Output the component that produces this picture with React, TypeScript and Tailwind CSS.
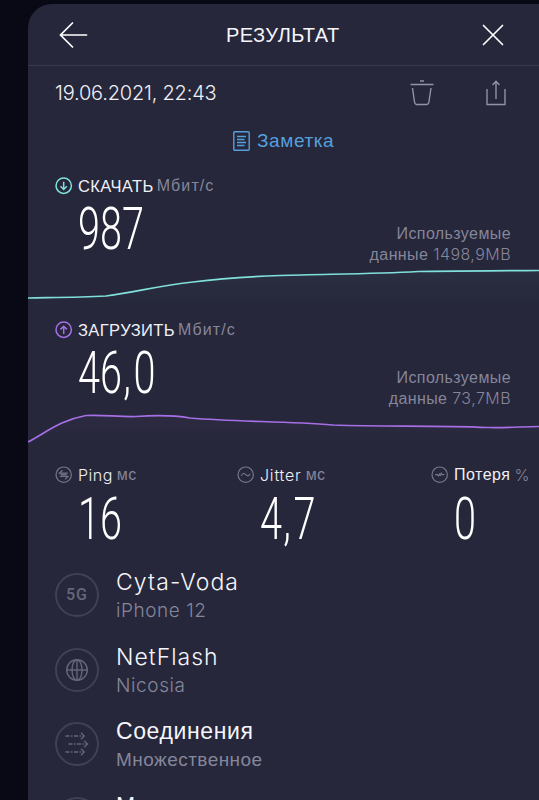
import type { ReactNode } from "react";
import { clsx } from "clsx";

const cyr = "font-['Liberation_Sans',sans-serif]";
const lat = "font-['Inter',sans-serif] font-light";

interface SpeedProps {
  title: string;
  value: string;
  used: string;
  color: string;
  up?: boolean;
  line: string;
}

// Big condensed reading, the decimal comma gets extra room
function Reading({ children, className }: { children: string; className?: string }) {
  const [whole, fraction] = children.split(",");
  return (
    <div
      className={clsx(
        "origin-left scale-x-[0.66] font-['Roboto',sans-serif] text-[60px] leading-[50px] font-light whitespace-nowrap text-white",
        className
      )}
    >
      {whole}
      {fraction && <span className="ml-0.5 tracking-[4px]">,</span>}
      {fraction}
    </div>
  );
}

function Speed({ title, value, used, color, up, line }: SpeedProps) {
  const id = up ? "glow-up" : "glow-down";
  return (
    <section className="h-36 shrink-0 pt-3">
      <div className="flex h-6 items-center pl-[27px]">
        <svg width="18" height="18" viewBox="0 0 18 18" fill="none" stroke={color} strokeWidth="1.5">
          <circle cx="8.7" cy="8.7" r="7.7" />
          <path d={up ? "M8.7 13V5.500M5.500 8.400l3.200-3.200 3.200 3.200" : "M8.700 4.700v7.500M5.500 9.300l3.200 3.200 3.200-3.200"} />
        </svg>
        <span className={clsx(cyr, "ml-[5px] text-[16.5px] tracking-[0.4px] text-[#f0f0f7]")}>{title}</span>
        <span className={clsx(cyr, "ml-[3px] text-[16px] tracking-[1.1px] text-[#85869a]")}>Мбит/с</span>
      </div>
      <div className="flex h-[66px] justify-between pt-[6px] pr-7 pl-[50px]">
        <Reading>{value}</Reading>
        <div className={clsx(cyr, "pt-5 text-right text-[16px] leading-5 whitespace-nowrap text-[#85869a]")}>
          <div className="tracking-[0.4px]">Используемые</div>
          <div>
            <span className="tracking-[0.4px]">данные </span>
            <span className={clsx(lat, "tracking-[0.45px]")}>{used}</span>
          </div>
        </div>
      </div>
      <svg className="block" width="511" height="42" viewBox="0 0 511 42" fill="none">
        <defs>
          <linearGradient id={id} x1="0" y1="0" x2="0" y2="1">
            <stop offset="0" stopColor={color} stopOpacity="0.045" />
            <stop offset="1" stopColor={color} stopOpacity="0" />
          </linearGradient>
        </defs>
        <path d={line + "V42H0Z"} fill={`url(#${id})`} />
        <path d={line} stroke={color} strokeWidth="1.7" />
      </svg>
    </section>
  );
}

interface StatProps {
  icon: ReactNode;
  label: string;
  labelClass: string;
  unit: string;
  unitClass: string;
  value: string;
}

function Stat({ icon, label, labelClass, unit, unitClass, value }: StatProps) {
  return (
    <div className="whitespace-nowrap">
      <div className="flex h-6 items-center">
        <svg className="shrink-0" width="18" height="18" viewBox="0 0 18 18" fill="none" stroke="#74758a" strokeWidth="1.2">
          <circle cx="8.7" cy="8.7" r="7.7" />
          {icon}
        </svg>
        <span className={clsx("ml-[5px] text-[#f0f0f7]", labelClass)}>{label}</span>
        <span className={clsx("ml-1 text-[#85869a]", unitClass)}>{unit}</span>
      </div>
      <Reading className="mt-[7px] ml-[23px]">{value}</Reading>
    </div>
  );
}

interface DetailProps {
  icon: ReactNode;
  title: string;
  titleClass: string;
  sub?: string;
  subClass?: string;
}

function Detail({ icon, title, titleClass, sub, subClass }: DetailProps) {
  return (
    <div className="flex h-[74.5px] shrink-0 pl-[27px]">
      <div className="mt-[15px] flex size-[44px] shrink-0 items-center justify-center rounded-full border-2 border-[#404156] text-[#65667b]">
        {icon}
      </div>
      <div className="ml-[17px] pt-[9px] whitespace-nowrap">
        <div className={clsx("leading-[30px] text-[#f5f5fb]", titleClass)}>{title}</div>
        {sub && <div className={clsx("leading-7 text-[#85869a]", subClass)}>{sub}</div>}
      </div>
    </div>
  );
}

export default function App() {
  return (
    <div className="h-[800px] w-[539px] overflow-hidden bg-[#080915] pt-1 pl-7">
      <main className="flex h-[796px] flex-col overflow-hidden rounded-tl-[24px] bg-[#26273a]">
        <header className="flex h-[62px] shrink-0 items-center border-b border-[#38394b] pr-[34px] pl-[31px]">
          <svg width="29" height="28" viewBox="0 0 29 28" fill="none" stroke="#fff" strokeWidth="1.7" strokeLinecap="round">
            <path d="M27.5 14H1.5M13.5 2 1.5 14l12 12" />
          </svg>
          <h1 className={clsx(cyr, "ml-[138px] text-[20px] tracking-[0.4px] text-[#f5f5fb]")}>РЕЗУЛЬТАТ</h1>
          <svg className="ml-auto" width="24" height="24" viewBox="0 0 24 24" fill="none" stroke="#fff" strokeWidth="1.7" strokeLinecap="round">
            <path d="m2.500 2.500 19 19M21.500 2.500l-19 19" />
          </svg>
        </header>

        <div className="flex h-[54px] shrink-0 items-center pr-[33px] pl-[27px]">
          <time className={clsx(lat, "text-[20px] tracking-[-0.2px] text-[#f0f0f7]")}>19.06.2021, 22:43</time>
          <svg className="ml-auto" width="24" height="28" viewBox="0 0 24 28" fill="none" stroke="#9293a7" strokeWidth="1.4">
            <path d="M.5 5.500h23M10 2h4M2.500 9l2 14q.4 2.500 2.500 2.500h9.500q2 0 2.400-2.500L21 9" />
          </svg>
          <svg className="ml-[52px]" width="20" height="28" viewBox="0 0 20 28" fill="none" stroke="#9293a7" strokeWidth="1.4">
            <path d="M1 10v15.500h18V10M10 20V2M6.500 6 10 2.200 13.500 6" />
          </svg>
        </div>

        <div className="flex h-[42px] shrink-0 items-center pl-[205px]">
          <svg width="17" height="20" viewBox="0 0 17 20" fill="none" stroke="#559fdd" strokeWidth="1.4">
            <rect x=".8" y=".8" width="15.4" height="18.4" rx="1" />
            <path d="M4 5.500h9M4 8.500h7.500M4 11.500h9M4 14.500h7.500" />
          </svg>
          <span className={clsx(cyr, "ml-[7px] text-[19px] tracking-[0.6px] text-[#559fdd]")}>Заметка</span>
        </div>

        <Speed
          title="СКАЧАТЬ"
          value="987"
          used="1498,9MB"
          color="#80e0db"
          line="M0 34C26 33.500 50 33.500 78 32C110 28 128 22 165 18C196 14 222 12.500 252 11.500C300 10 345 10 390 7.500C430 6.500 470 7 511 6.500"
        />
        <Speed
          up
          title="ЗАГРУЗИТЬ"
          value="46,0"
          used="73,7MB"
          color="#a66fe5"
          line="M0 34C16 26 32 12 58 7.500C75 6.500 90 9 108 8.500C128 7 145 7 162 10C210 14 255 13 305 17C360 19 405 17 460 19.500C480 20 495 18.500 511 18.500"
        />

        <div className="grid h-[108px] shrink-0 grid-cols-[182px_194px_1fr] pt-[13px] pl-[27px]">
          <Stat
            icon={<path d="M12.800 7.100H4.500l3-2.800M4.800 10.300h8.200l-3 3M5.700 8.700h6" />}
            label="Ping"
            labelClass="font-['Inter',sans-serif] font-light text-[16px] tracking-[0.5px]"
            unit="мс"
            unitClass="font-['Liberation_Sans',sans-serif] text-[16px] tracking-[0.3px]"
            value="16"
          />
          <Stat
            icon={<path d="M4.200 9.700c1.500-3 3-2.500 4.500-1s3 2 4.500-1" />}
            label="Jitter"
            labelClass="font-['Inter',sans-serif] font-light text-[16px] tracking-[0.8px]"
            unit="мс"
            unitClass="font-['Liberation_Sans',sans-serif] text-[16px] tracking-[0.3px]"
            value="4,7"
          />
          <Stat
            icon={<path d="M4 8.700h2.500l1 1.300L9 7.300M9 10l1.300-2.700.9 1.400h2.300" />}
            label="Потеря"
            labelClass="font-['Liberation_Sans',sans-serif] text-[16px] tracking-[0.5px]"
            unit="%"
            unitClass="font-['Inter',sans-serif] font-light text-[16px]"
            value="0"
          />
        </div>

        <Detail
          icon={<span className="font-['Roboto',sans-serif] text-[16px] font-medium tracking-[1px]">5G</span>}
          title="Cyta-Voda"
          titleClass="font-['Inter',sans-serif] font-light text-[23px] tracking-[1.1px]"
          sub="iPhone 12"
          subClass="font-['Inter',sans-serif] font-light text-[19px] tracking-[0.55px]"
        />
        <Detail
          icon={
            <svg width="24" height="24" viewBox="0 0 24 24" fill="none" stroke="currentColor" strokeWidth="1.4">
              <circle cx="12" cy="12" r="10.3" />
              <ellipse cx="12" cy="12" rx="5" ry="10.3" />
              <path d="M12 1.700v20.600M1.700 12h20.600" />
            </svg>
          }
          title="NetFlash"
          titleClass="font-['Inter',sans-serif] font-light text-[23px] tracking-[1px]"
          sub="Nicosia"
          subClass="font-['Inter',sans-serif] font-light text-[19px] tracking-[0.6px]"
        />
        <Detail
          icon={
            <svg width="24" height="24" viewBox="0 0 24 24" fill="none" stroke="currentColor" strokeWidth="1.3">
              <path strokeDasharray="4 1.500 1.500 1.500" d="M.5 4h18.500M3.500 12h18.500M.5 20h18.500" />
              <path d="m16 .8 3.200 3.200L16 7.200M19.200 8.800l3.200 3.200-3.200 3.200M16 16.800l3.200 3.200-3.200 3.200" />
            </svg>
          }
          title="Соединения"
          titleClass="font-['Liberation_Sans',sans-serif] text-[23px] tracking-[0.6px]"
          sub="Множественное"
          subClass="font-['Liberation_Sans',sans-serif] text-[19px] tracking-[0.45px]"
        />
        <Detail icon={null} title="М" titleClass="font-['Liberation_Sans',sans-serif] text-[23px]" />
      </main>
    </div>
  );
}
